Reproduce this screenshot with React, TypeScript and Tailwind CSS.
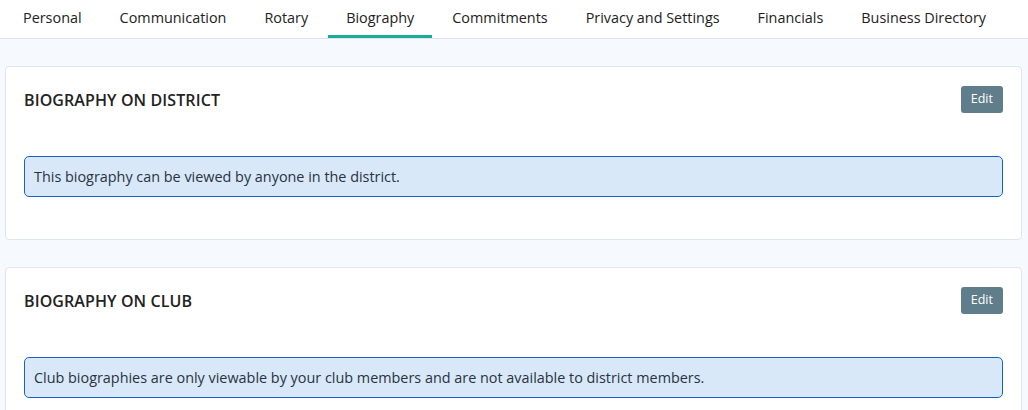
const tabs = [
  "Personal",
  "Communication",
  "Rotary",
  "Biography",
  "Commitments",
  "Privacy and Settings",
  "Financials",
  "Business Directory",
];

function BioCard({ title, note }: { title: string; note: string }) {
  return (
    <section className="bg-white border border-[#dfe6ee] rounded-[4px] px-[18px] pt-[19px] pb-[42px]">
      <div className="flex items-center justify-between">
        <h2 className="text-[16px] font-semibold text-[#222] uppercase tracking-[0.1px]">
          {title}
        </h2>
        <button className="h-[27px] px-[10px] rounded-[3px] bg-[#607d8b] text-white text-[12.5px]">
          Edit
        </button>
      </div>
      <div className="mt-[43px] border border-[#1565c0] bg-[#d9e8f9] rounded-[5px] h-[41px] px-[9px] flex items-center text-[14.4px] text-[#27333f]">
        {note}
      </div>
    </section>
  );
}

export default function App() {
  return (
    <div
      className="min-h-screen bg-[#f6f9fd]"
      style={{ fontFamily: '"Open Sans", "Noto Sans", sans-serif' }}
    >
      {/* タブ */}
      <nav className="bg-white border-b border-[#dbe5ee] h-[39px] flex gap-[2px] pl-[5px]">
        {tabs.map((t) => (
          <div
            key={t}
            className={
              t === "Biography"
                ? "px-[18px] pt-[7px] text-[14.4px] text-[#222] border-b-[3px] border-[#1aab9b] h-[38px]"
                : "px-[18px] pt-[7px] text-[14.4px] text-[#222]"
            }
          >
            {t}
          </div>
        ))}
      </nav>

      <div className="pl-[5px] pr-[6px] pt-[27px] flex flex-col gap-[27px]">
        <BioCard
          title="Biography on District"
          note="This biography can be viewed by anyone in the district."
        />
        <BioCard
          title="Biography on Club"
          note="Club biographies are only viewable by your club members and are not available to district members."
        />
      </div>
    </div>
  );
}
